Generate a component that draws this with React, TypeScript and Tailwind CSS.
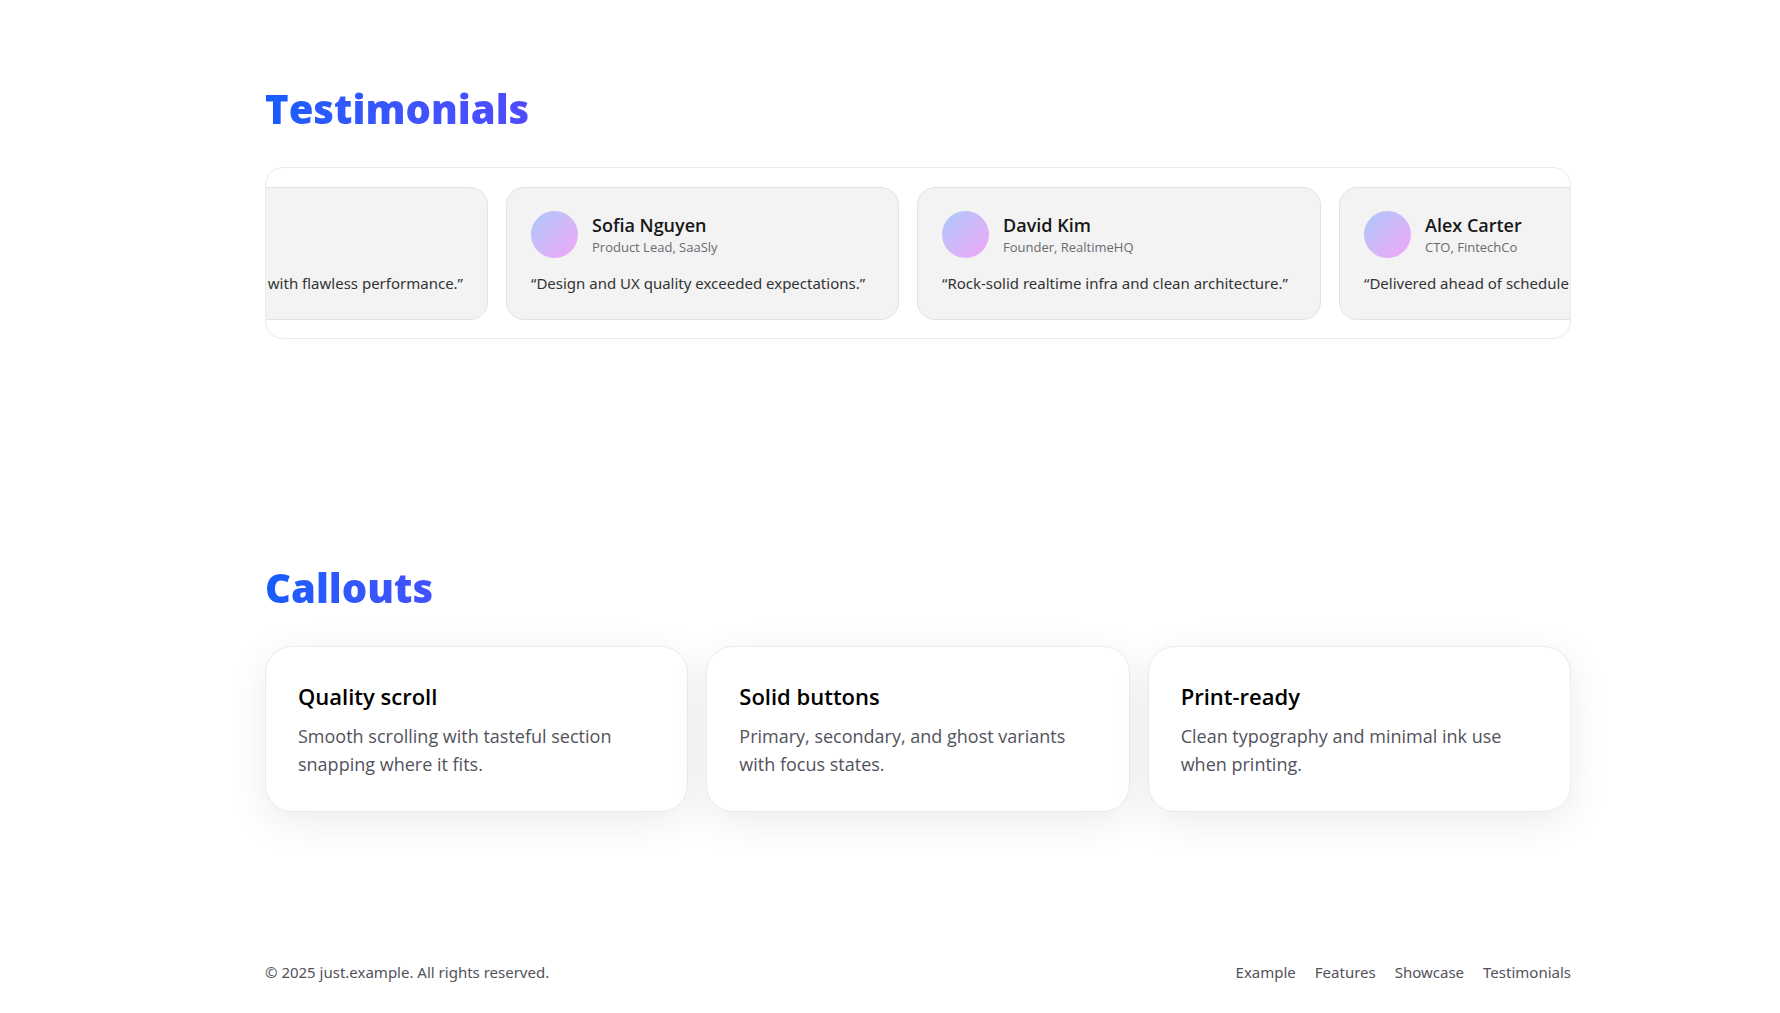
type Testimonial = { name?: string; role?: string; quote: string; width: string };

const testimonials: Testimonial[] = [
  { quote: "with flawless performance.”", width: "w-[260px]" },
  { name: "Sofia Nguyen", role: "Product Lead, SaaSly", quote: "“Design and UX quality exceeded expectations.”", width: "w-[393px]" },
  { name: "David Kim", role: "Founder, RealtimeHQ", quote: "“Rock-solid realtime infra and clean architecture.”", width: "w-[404px]" },
  { name: "Alex Carter", role: "CTO, FintechCo", quote: "“Delivered ahead of schedule", width: "w-[393px]" },
];

const callouts = [
  { title: "Quality scroll", text: "Smooth scrolling with tasteful section snapping where it fits." },
  { title: "Solid buttons", text: "Primary, secondary, and ghost variants with focus states." },
  { title: "Print-ready", text: "Clean typography and minimal ink use when printing." },
];

const links = ["Example", "Features", "Showcase", "Testimonials"];

function Heading({ children }: { children: string }) {
  return (
    <h2 className="bg-linear-to-r from-[#155dfc] via-[#4f4bff] via-20% to-[#c800de] bg-clip-text text-[40px] leading-[48px] font-extrabold text-transparent">
      {children}
    </h2>
  );
}

function TestimonialCard({ name, role, quote, width }: Testimonial) {
  return (
    <figure className={`${width} flex shrink-0 flex-col justify-end rounded-[18px] border border-[#e2e2e2] bg-[#f3f3f3] px-6 pt-[23px] pb-6`}>
      {name && (
        <figcaption className="flex items-center gap-[14px]">
          <span className="size-[47px] rounded-full bg-linear-to-br from-[#a9c8fb] to-[#f0a5f6]" />
          <span className="flex flex-col">
            <span className="text-[18px] leading-6 font-semibold text-[#171717]">{name}</span>
            <span className="text-[13px] leading-5 text-[#6a6a72]">{role}</span>
          </span>
        </figcaption>
      )}
      <blockquote className={`mt-[13px] font-['Noto_Sans',sans-serif] text-[15px] leading-6 whitespace-nowrap text-[#333333] ${name ? "" : "text-right"}`}>
        {quote}
      </blockquote>
    </figure>
  );
}

export default function App() {
  return (
    <div className="min-h-screen bg-white pl-14 font-['Open_Sans','Noto_Sans',sans-serif] text-black">
      <div className="mx-auto max-w-[1306px]">
        <main>
          <section id="testimonials" className="pt-[85px]">
            <Heading>Testimonials</Heading>
            <div className="mt-[34px] overflow-hidden rounded-[18px] border border-[#ebebeb] pt-[19px] pb-[18px]">
              <div className="-ml-[38px] flex gap-[18px]">
                {testimonials.map((t) => (
                  <TestimonialCard key={t.quote} {...t} />
                ))}
              </div>
            </div>
          </section>

          <section id="showcase" className="pt-[225px]">
            <Heading>Callouts</Heading>
            <div className="mt-[34px] grid grid-cols-3 gap-[18px]">
              {callouts.map((c) => (
                <article key={c.title} className="rounded-[27px] border border-[#ebebeb] bg-white px-8 pt-[31px] pb-[33px] shadow-[0_10px_40px_rgba(0,0,0,0.08)]">
                  <h3 className="text-[22px] leading-9 font-semibold">{c.title}</h3>
                  <p className="mt-2 text-[18px] leading-7 text-[#52525c]">{c.text}</p>
                </article>
              ))}
            </div>
          </section>
        </main>

        <footer className="mt-[148px] flex items-center justify-between font-['Noto_Sans',sans-serif] text-[15px] leading-6 text-[#52525c]">
          <p>© 2025 just.example. All rights reserved.</p>
          <nav className="flex gap-[19px]">
            {links.map((l) => (
              <a key={l} href={`#${l.toLowerCase()}`}>{l}</a>
            ))}
          </nav>
        </footer>
      </div>
    </div>
  );
}
